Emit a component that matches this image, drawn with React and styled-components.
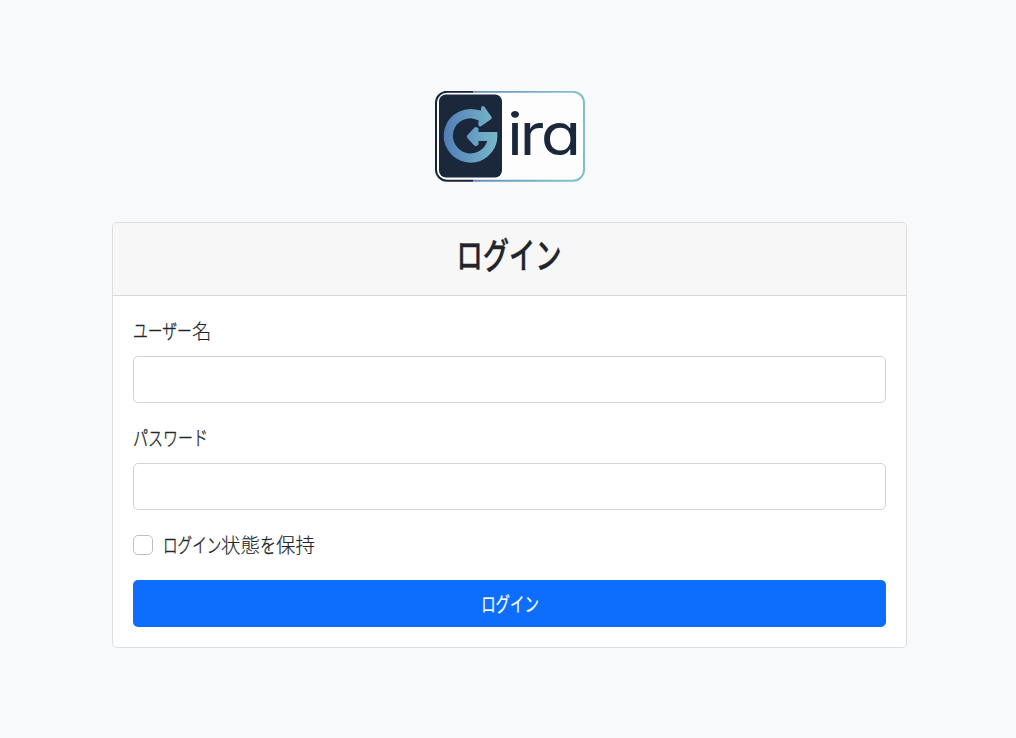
import React from 'react';
import styled, { createGlobalStyle } from 'styled-components';

const GlobalStyle = createGlobalStyle`
  *, *::before, *::after { box-sizing: border-box; }
  body {
    margin: 0;
    background: #f8f9fb;
    color: #212529;
    font-family: "Noto Sans CJK JP", sans-serif;
    font-size: 20px;
    line-height: 30px;
  }
`;

const Page = styled.main`
  display: flex;
  flex-direction: column;
  align-items: center;
  min-height: 738px;
  padding: 91px 109px 90px 112px;
`;

const Logo = styled.svg`
  display: block;
  width: 150px;
  height: 91px;
  margin: 0 0 40px 1px;
`;

const Wordmark = styled.text`
  font-family: Inter, sans-serif;
  font-weight: 400;
  font-feature-settings: "cv11", "ss03";
`;

const Card = styled.section`
  width: 795px;
  height: 426px;
  background: #fff;
  border: 1px solid #dcdddf;
  border-radius: 5px;
  overflow: hidden;
`;

const CardHeader = styled.header`
  display: flex;
  justify-content: center;
  height: 73px;
  padding-top: 8px;
  background: #f7f7f7;
  border-bottom: 1px solid #d8d9da;
`;

const Title = styled.h1`
  margin: 0;
  font-size: 36px;
  font-weight: 500;
  line-height: 44px;
  -webkit-text-stroke: 0.4px currentColor;
`;

const Form = styled.form`
  display: flex;
  flex-direction: column;
  padding: 20px;
`;

const Field = styled.div`
  display: flex;
  flex-direction: column;
  gap: 10px;
  margin-bottom: 20px;
`;

const Words = styled.span`
  display: inline-block;
  width: ${({ $width }) => ($width ? `${$width}px` : 'auto')};
  transform: scaleX(${({ $narrow }) => $narrow || 1});
  transform-origin: ${({ $origin }) => $origin || 'left'} center;
  white-space: nowrap;
`;

const Kana = styled(Words)`
  -webkit-text-stroke: 0.4px currentColor;
`;

const Label = styled.label`
  display: flex;
  height: 30px;
  font-weight: 300;
  -webkit-text-stroke: 0.15px currentColor;
`;

const Input = styled.input`
  width: 100%;
  height: 47px;
  padding: 8px 15px;
  border: 1px solid #ced4da;
  border-radius: 5px;
  background: #fff;
  font: inherit;
`;

const Remember = styled(Label)`
  align-items: center;
  margin-bottom: 20px;
`;

const Checkbox = styled.input`
  appearance: none;
  width: 20px;
  height: 20px;
  margin: 0 10px 0 0;
  border: 1px solid #bfbfbf;
  border-radius: 5px;
  background: #fff;
`;

const Submit = styled.button`
  width: 100%;
  height: 47px;
  padding: 0;
  border: 0;
  border-radius: 5px;
  background: #0d6efd;
  color: #fff;
  font: inherit;
  -webkit-text-stroke: 0.2px currentColor;
`;

function GiraLogo() {
  return (
    <Logo viewBox="0 0 150 91" role="img" aria-label="Gira">
      <defs>
        <linearGradient id="frame" gradientUnits="userSpaceOnUse" x1="0" y1="0" x2="150" y2="0">
          <stop offset="0.255" stopColor="#17233a" />
          <stop offset="0.255" stopColor="#658fbd" />
          <stop offset="0.85" stopColor="#7dbfcb" />
        </linearGradient>
        <linearGradient id="mark" gradientUnits="userSpaceOnUse" x1="9" y1="0" x2="62" y2="0">
          <stop stopColor="#527db7" />
          <stop offset="1" stopColor="#76b9c9" />
        </linearGradient>
      </defs>
      <rect x="1" y="0.8" width="148" height="89" rx="11" fill="#fdfdfd" stroke="url(#frame)" strokeWidth="2" />
      <rect x="4" y="3.4" width="63" height="83.2" rx="7" fill="#1b273b" />
      <path d="M44 24.3 A22.2 22.2 0 1 0 57.7 45.5" fill="none" stroke="url(#mark)" strokeWidth="9.2" />
      <path
        d="M42 18.8 Q44 19.6 46.2 19.5 L46 16.5 Q47 14 49.2 15.6 L56.6 26 Q57.4 27.6 55.6 28.5 L46 35.2 Q43.7 36.2 43.3 33.8 L43.6 29.2 Q40 28.2 37 27.3 Z M62.3 41 H43.5 V37.5 Q42 35 39.5 36.5 L32.3 44.2 Q31.3 45.6 32.3 47 L39.5 54.7 Q42 56 43.5 53.3 V50 H61.7 Q62.6 45.5 62.3 41 Z"
        fill="url(#mark)"
      />
      <Wordmark
        transform="translate(72 64) scale(1.12 1)"
        x="0 11.2 30.2"
        fontSize="59"
        fill="#1b273b"
      >
        ira
      </Wordmark>
    </Logo>
  );
}

export default function App() {
  return (
    <>
      <GlobalStyle />
      <Page>
        <GiraLogo />
        <Card>
          <CardHeader>
            <Title><Words $narrow={0.73} $origin="center">ログイン</Words></Title>
          </CardHeader>
          <Form>
            <Field>
              <Label htmlFor="username">
                <Kana $width={59} $narrow={0.74}>ユーザー</Kana>
                <Words $narrow={0.97}>名</Words>
              </Label>
              <Input id="username" />
            </Field>
            <Field>
              <Label htmlFor="password"><Kana $narrow={0.75}>パスワード</Kana></Label>
              <Input id="password" type="password" />
            </Field>
            <Remember>
              <Checkbox type="checkbox" />
              <Kana $width={58} $narrow={0.73}>ログイン</Kana>
              <Words $width={39} $narrow={0.97}>状態</Words>
              <Kana $width={16} $narrow={0.8}>を</Kana>
              <Words $narrow={0.97}>保持</Words>
            </Remember>
            <Submit type="button"><Words $narrow={0.72} $origin="center">ログイン</Words></Submit>
          </Form>
        </Card>
      </Page>
    </>
  );
}
